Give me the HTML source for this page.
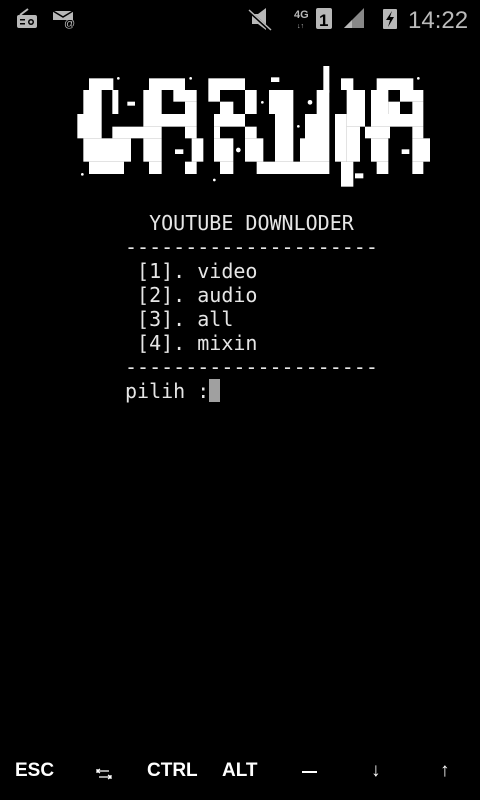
<!DOCTYPE html>
<html><head><meta charset="utf-8"><style>
html,body{margin:0;padding:0;background:#000;width:480px;height:800px;overflow:hidden;position:relative}
.t{position:absolute;left:125px;top:211px;font-family:"DejaVu Sans Mono",monospace;font-size:20px;line-height:24px;color:#e6e6e6;white-space:pre}
.cur{display:inline-block;width:11px;height:23px;background:#a0a0a0;vertical-align:top}
.bb{position:absolute;top:760px;font-family:"Liberation Sans",sans-serif;font-weight:bold;font-size:19px;color:#fff}
</style></head><body>
<svg width="480" height="40" style="position:absolute;left:0;top:0">
<g fill="#b8b8b8">
<rect x="17" y="15" width="20" height="13" rx="2"/>
<path d="M20 15 L28 9" stroke="#b8b8b8" stroke-width="2"/>
<rect x="20" y="19" width="5" height="1.5" fill="#000"/><rect x="20" y="23" width="5" height="1.5" fill="#000"/>
<circle cx="31" cy="22" r="3" fill="#000"/><circle cx="31" cy="22" r="1.5"/>
<path d="M53 11h20v9H53z"/><path d="M53 11l10 6 10-6" stroke="#000" stroke-width="1.5" fill="none"/>
<text x="64" y="27" font-size="11" font-family="Liberation Sans">@</text>
<path d="M252 14h6l8-6v22l-8-6h-6z"/>
<path d="M248 10l24 22" stroke="#000" stroke-width="3"/><path d="M249 10l22 20" stroke="#b8b8b8" stroke-width="1.5"/>
<text x="294" y="18" font-size="11" font-weight="bold" font-family="Liberation Sans">4G</text>
<text x="297" y="28" font-size="7" font-family="Liberation Sans">↓↑</text>
<rect x="316" y="8" width="16" height="21" rx="2"/>
<text x="319" y="26" font-size="17" font-weight="bold" fill="#000" font-family="Liberation Sans">1</text>
<path d="M344 28 L364 8 V28 Z" fill="#888"/><path d="M344 28 L352 20 V28Z"/>
<rect x="383" y="9" width="14" height="20" rx="1"/>
<path d="M392 11 l-6 9h4l-2 7 6-10h-4z" fill="#000"/>
</g>
<text x="408" y="28" font-size="24" fill="#bbb" font-family="Liberation Sans">14:22</text>
</svg>
<svg width="370" height="130" viewBox="0 0 1110 390" style="position:absolute;left:70px;top:60px" fill="#fff">
<rect x="57" y="55" width="73" height="35"/>
<rect x="40" y="90" width="55" height="72"/><rect x="127" y="90" width="18" height="72"/>
<rect x="22" y="162" width="73" height="73"/>
<rect x="127" y="200" width="148" height="35"/>
<rect x="40" y="235" width="143" height="70"/>
<rect x="57" y="305" width="105" height="37"/>
<rect x="172" y="125" width="23" height="12"/>
<rect x="237" y="55" width="108" height="35"/>
<rect x="220" y="90" width="55" height="72"/><rect x="310" y="90" width="70" height="35"/><rect x="345" y="125" width="35" height="37"/>
<rect x="220" y="162" width="160" height="38"/><rect x="345" y="200" width="35" height="35"/>
<rect x="220" y="235" width="55" height="70"/><rect x="365" y="235" width="35" height="70"/>
<rect x="237" y="305" width="38" height="37"/><rect x="345" y="305" width="35" height="37"/>
<rect x="315" y="268" width="25" height="14"/>
<rect x="415" y="55" width="110" height="35"/>
<rect x="415" y="90" width="35" height="35"/><rect x="525" y="90" width="35" height="72"/>
<rect x="450" y="125" width="40" height="37"/>
<rect x="432" y="162" width="93" height="38"/>
<rect x="432" y="200" width="18" height="35"/><rect x="525" y="200" width="35" height="35"/>
<rect x="432" y="235" width="58" height="70"/><rect x="525" y="235" width="55" height="70"/>
<rect x="450" y="305" width="40" height="37"/>
<circle cx="505" cy="270" r="7"/>
<rect x="597" y="90" width="73" height="72"/><rect x="615" y="162" width="55" height="143"/>
<rect x="690" y="235" width="15" height="70"/><rect x="705" y="162" width="73" height="143"/>
<rect x="740" y="90" width="38" height="72"/>
<rect x="560" y="305" width="218" height="37"/>
<rect x="760" y="18" width="18" height="80"/>
<rect x="603" y="52" width="25" height="14"/>
<circle cx="577" cy="127" r="4"/><circle cx="720" cy="127" r="7"/><circle cx="685" cy="199" r="4"/>
<rect x="813" y="55" width="37" height="35"/>
<rect x="830" y="90" width="55" height="110"/>
<rect x="795" y="162" width="35" height="143"/><rect x="830" y="200" width="40" height="105"/>
<rect x="813" y="305" width="37" height="75"/><rect x="855" y="340" width="25" height="15"/>
<rect x="920" y="55" width="110" height="35"/>
<rect x="903" y="90" width="52" height="72"/><rect x="990" y="90" width="70" height="35"/><rect x="1027" y="125" width="33" height="37"/><rect x="955" y="125" width="35" height="37"/>
<rect x="903" y="162" width="157" height="38"/>
<rect x="885" y="200" width="75" height="35"/><rect x="1027" y="200" width="33" height="35"/>
<rect x="903" y="235" width="52" height="70"/><rect x="1027" y="235" width="53" height="70"/>
<rect x="920" y="305" width="35" height="37"/><rect x="1027" y="305" width="33" height="37"/>
<rect x="995" y="268" width="23" height="14"/>
<circle cx="145" cy="55" r="4"/><circle cx="362" cy="55" r="4"/><circle cx="37" cy="343" r="4"/><circle cx="433" cy="360" r="4"/><circle cx="1045" cy="55" r="4"/>
</svg>
<div class="t">  YOUTUBE DOWNLODER
---------------------
 [1]. video
 [2]. audio
 [3]. all
 [4]. mixin
---------------------
pilih :<span class="cur"></span></div>
<div class="bb" style="left:15px">ESC</div>
<svg width="16" height="12" style="position:absolute;left:96px;top:768px" stroke="#fff" stroke-width="1.2" fill="none">
<path d="M1 1v4M1 3h12M1 3l3-2M1 3l3 2M15 7v4M3 9h12M15 9l-3-2M15 9l-3 2"/>
</svg>
<div class="bb" style="left:147px">CTRL</div>
<div class="bb" style="left:222px">ALT</div>
<div style="position:absolute;left:302px;top:771px;width:15px;height:2px;background:#fff"></div>
<div class="bb" style="left:371px;font-weight:normal">↓</div>
<div class="bb" style="left:440px;font-weight:normal">↑</div>
</body></html>
